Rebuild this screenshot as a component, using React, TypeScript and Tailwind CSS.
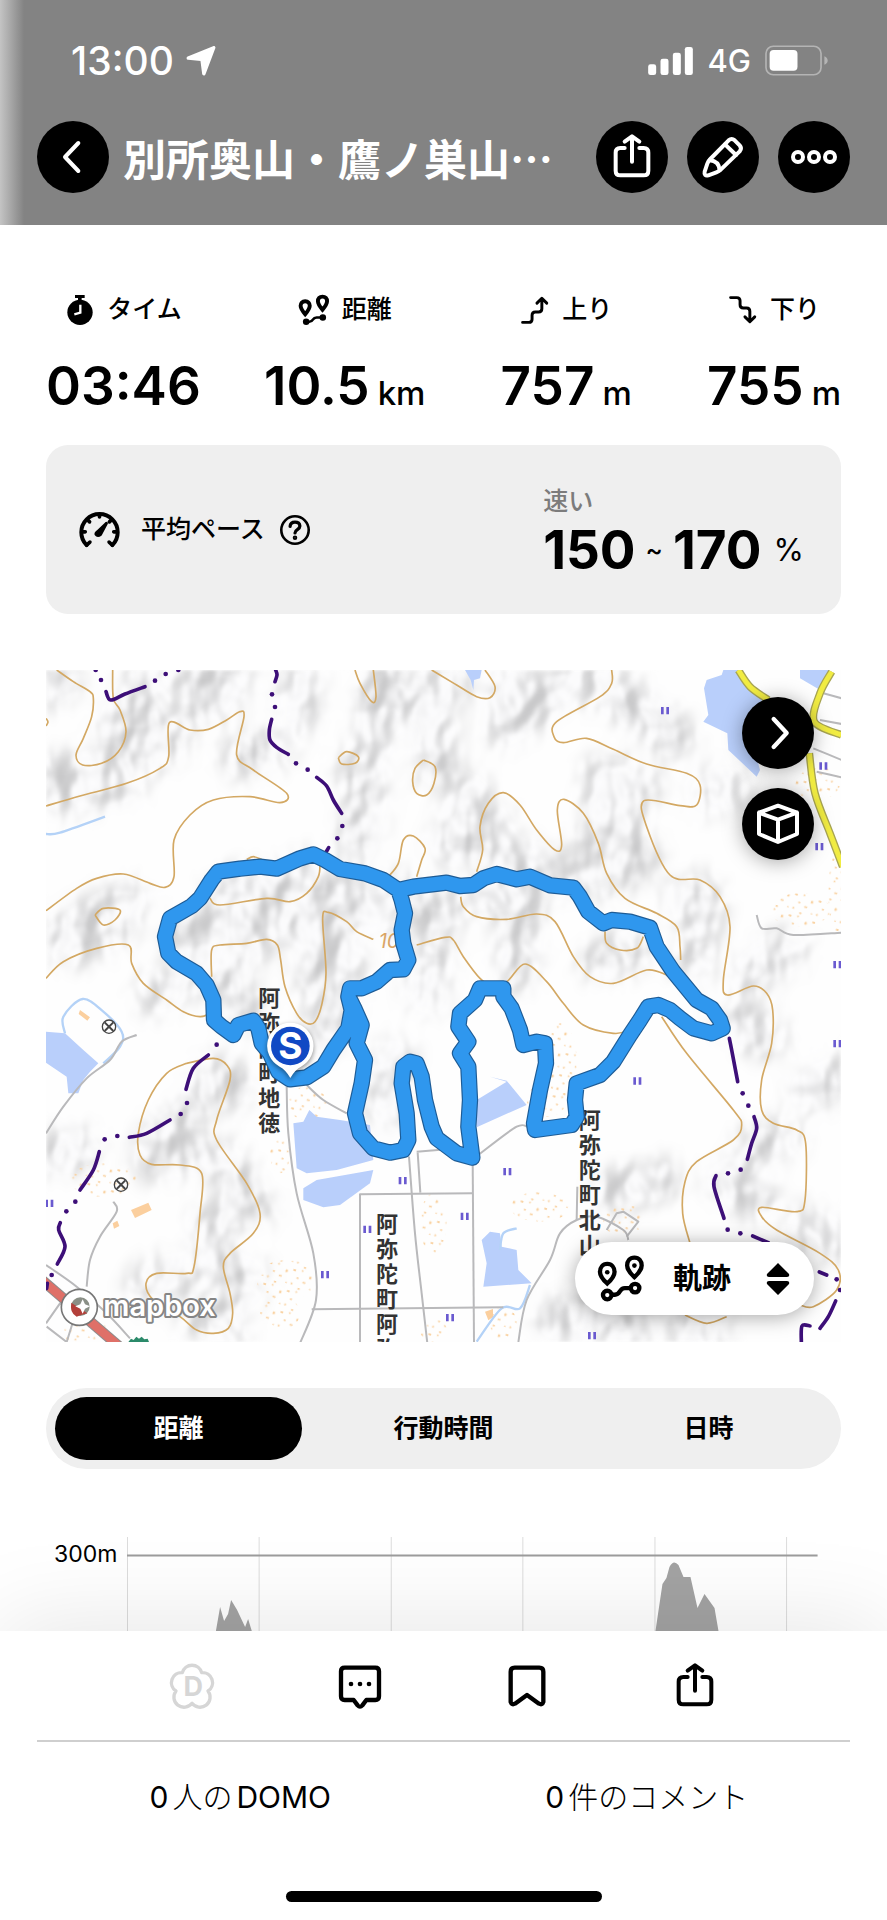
import { useState } from "react";
import type { ReactNode } from "react";
import { clsx } from "clsx";

// --- ICONS ---
type IconProps = { className?: string };

function Glyph({ className, width = 12, children }: IconProps & { width?: number; children: ReactNode }) {
  return (
    <svg
      viewBox="-72 -72 144 144"
      fill="none"
      stroke="currentColor"
      strokeWidth={width}
      strokeLinecap="round"
      strokeLinejoin="round"
      className={clsx("size-12", className)}
      aria-hidden="true"
    >
      {children}
    </svg>
  );
}

const ShareIcon = () => (
  <Glyph>
    <path d="M-22-27H-35q-14 0-14 14V41q0 14 14 14H35q14 0 14-14V-13q0-14-14-14H22" />
    <path d="M0 14V-61M-22-46L0-62 22-46" />
  </Glyph>
);

const PencilIcon = () => (
  <Glyph>
    <path d="M17-50Q26-58 35-50L50-35Q58-26 50-17L-6 37Q-12 43-20 46L-44 55Q-58 58-55 44L-47 20Q-44 12-38 6Z" />
    <path d="M6-38L39-6M-40 10Q-12 12-10 40" />
  </Glyph>
);

const MoreIcon = () => (
  <Glyph>
    <circle cx="-48" cy="0" r="15" />
    <circle cx="0" cy="0" r="15" />
    <circle cx="48" cy="0" r="15" />
  </Glyph>
);

const BackIcon = () => (
  <Glyph>
    <path d="M16-42L-24 0 16 42" />
  </Glyph>
);

const NextIcon = () => (
  <Glyph width={13}>
    <path d="M-13-42L26 0-13 42" />
  </Glyph>
);

const CubeIcon = () => (
  <Glyph>
    <path d="M0-55L57-34V30L0 54-57 30V-34ZM-57-34L0-13 57-34M0-13V54" />
  </Glyph>
);

const CommentIcon = () => (
  <Glyph width={13}>
    <path d="M-46-55H46q11 0 11 11V31q0 11-11 11H19L7 58Q0 66-7 58L-19 42H-46q-11 0-11-11V-44q0-11 11-11z" />
    <g fill="currentColor" stroke="none">
      <circle cx="-27" cy="-6" r="7" />
      <circle cx="0" cy="-6" r="7" />
      <circle cx="27" cy="-6" r="7" />
    </g>
  </Glyph>
);

const BookmarkIcon = () => (
  <Glyph width={13}>
    <path d="M-37-55H37q12 0 12 12V48q-3 10-13 5L0 27-36 53q-10 5-13-5V-43q0-12 12-12z" />
  </Glyph>
);

const DomoIcon = () => (
  <Glyph width={10} className="text-[#d6d6d6]">
    <path d="M29-40A30 30 0 0 1 48 15A30 30 0 0 1 0 52A30 30 0 0 1-48 15A30 30 0 0 1-29-40A30 30 0 0 1 29-40Z" />
    <text
      x="4"
      y="30"
      textAnchor="middle"
      fontSize="81"
      fill="currentColor"
      stroke="none"
      className="font-['Inter',sans-serif] font-bold"
    >
      D
    </text>
  </Glyph>
);

function RouteIcon({ className }: IconProps) {
  const pin = "M0-25c14 0 22 11 22 24C22 14 0 34 0 34S-22 14-22-1C-22-14-14-25 0-25z";
  return (
    <svg viewBox="470 763 145 145" fill="none" stroke="currentColor" strokeWidth="13" className={className} aria-hidden="true">
      <path d={pin} transform="translate(501 815)" />
      <path d={pin} transform="translate(583 796)" />
      <circle cx="501" cy="884" r="13" />
      <circle cx="585" cy="863" r="13" />
      <path d="M514 883h10c18 0 12-20 30-20h18" />
      <g fill="currentColor" stroke="none">
        <circle cx="501" cy="815" r="7" />
        <circle cx="583" cy="795" r="7" />
      </g>
    </svg>
  );
}

function DistanceIcon({ className }: IconProps) {
  return (
    <svg viewBox="770 43 98 96" fill="none" stroke="currentColor" strokeWidth="12" className={className} aria-hidden="true">
      <path d="M792 64c9 0 14 6 14 14 0 9-14 26-14 26s-14-17-14-26c0-8 5-14 14-14zM845 50c9 0 14 6 14 14 0 9-14 26-14 26s-14-17-14-26c0-8 5-14 14-14z" />
      <path d="M795 127h10c14 0 7-13 22-13h18" strokeWidth="8" />
      <g fill="currentColor" stroke="none">
        <circle cx="795" cy="127" r="10" />
        <circle cx="846" cy="114" r="10" />
      </g>
    </svg>
  );
}

const StopwatchIcon = ({ className }: IconProps) => (
  <svg viewBox="75 45 90 90" className={className} aria-hidden="true">
    <path d="M105 45h29v9h-9v8h-11v-8h-9z" />
    <circle cx="120" cy="97" r="38" />
    <path d="M121 74v24l-18 5" fill="none" stroke="#fff" strokeWidth="7" />
  </svg>
);

const ClimbIcon = ({ className }: IconProps) => (
  <svg
    viewBox="223 45 92 90"
    fill="none"
    stroke="currentColor"
    strokeWidth="9"
    strokeLinecap="round"
    strokeLinejoin="round"
    className={className}
    aria-hidden="true"
  >
    <path d="M231 128h19q10 0 10-10v-12q0-10 10-10h10q10 0 10-10V55M275 69l15-15 15 15" />
  </svg>
);

const PaceIcon = () => (
  <svg viewBox="116 685 130 116" fill="none" stroke="#000" strokeWidth="12" strokeLinecap="round" className="h-[39px] w-[43px]" aria-hidden="true">
    <path d="M142 790a55 55 0 1 1 78 0" />
    <path d="M142 790l10-9M220 790l-10-9M128 750h10M234 750h-10M181 697v8M145 714l6 6M217 714l-6 6" strokeWidth="11" />
    <path d="M175 750l27-26-18 34q-7 5-12 1t3-9z" fill="#000" strokeWidth="9" strokeLinejoin="round" />
  </svg>
);

const HelpIcon = () => (
  <svg viewBox="720 701 98 98" fill="none" stroke="#000" strokeWidth="8" strokeLinecap="round" className="block size-8" aria-hidden="true">
    <circle cx="769" cy="750" r="42" />
    <path d="M754 739q1-13 15-13t15 12c0 12-15 10-15 21" strokeWidth="10" />
    <circle cx="769" cy="774" r="3" />
  </svg>
);

// --- MAP DATA ---
// Every list is "x y x y ..." in map units, three units to a pixel.
const contours = [
  "50 30 100 65 150 95 160 115 155 170 130 235 108 285 128 315 185 310 235 275 258 215 240 150 220 115 218 30",
  "18 438 120 408 260 370 360 325 386 290 388 188 450 210 505 208 560 180 600 155 612 170 590 285 640 330 740 400 720 428 630 410 520 420 450 465 402 540 402 650 375 682 330 670 250 642 170 655 110 685 18 752",
  "945 30 960 70 995 125 1008 110 1000 30",
  "1175 30 1200 45 1250 75 1310 110 1350 113 1365 80 1335 30",
  "895 293 920 275 955 290 945 310 905 312 895 293",
  "1150 300 1185 320 1182 370 1160 405 1130 400 1118 365 1125 325 1150 300",
  "1045 650 1075 610 1090 540 1120 528 1155 565 1145 600 1130 650",
  "165 765 190 745 240 750 225 780 190 795 165 765",
  "18 955 70 905 170 865 265 855 275 910 310 970 380 1020 430 1055 480 1070 510 1060",
  "840 610 835 650 800 700 750 725 680 715 540 735 510 715",
  "620 598 640 590 665 598",
  "515 950 515 870 540 855 620 850 680 838 712 855 722 900 735 980 770 1060 800 1090 825 1085 845 1035 858 940 848 775 865 757 920 785 950 815 1000 838",
  "1130 855 1215 832 1240 840 1270 890 1320 955 1350 970 1400 965 1455 912 1520 965 1570 1030 1630 1095 1720 1120 1765 1110 1790 1080",
  "1310 635 1328 570 1320 500 1345 430 1390 398 1440 435 1490 510 1545 570 1565 555 1552 450 1572 418 1630 460 1675 550 1700 640 1755 715 1850 760 1910 800 1920 860 1922 900",
  "1715 30 1715 70 1680 110 1550 185 1542 230 1570 248 1640 235 1720 268 1820 312 1940 340 1980 375 1970 435 1920 437 1812 422 1820 500 1890 645 1980 660 2040 710 2070 800 2050 960 2062 1005 2140 978 2180 1000 2198 1050 2195 1150 2165 1260 2165 1350 2200 1390 2270 1410 2297 1450 2295 1620 2270 1655 2165 1642 2165 1670 2210 1710 2340 1780 2395 1830 2390 1890 2320 1940 2280 1935",
  "1262 710 1270 740 1310 770 1400 778 1490 762 1545 785 1600 890 1650 950 1720 970 1820 930 1880 945",
  "1695 815 1700 850 1740 870 1790 865 1810 830",
  "1865 1070 1940 1180 2080 1350 2105 1395 2080 1440 1970 1505 1935 1565 1928 1660 1950 1750",
  "1935 1965 2000 1990 2060 1970",
  "440 1210 380 1240 325 1320 295 1420 300 1485 335 1513 420 1515 485 1540 480 1660 462 1820 440 1840 350 1840 318 1870 340 1920 420 1970 470 2010 520 2020 565 2005 578 1960 570 1900 550 1820 570 1780 640 1720 660 1660 620 1570 530 1440 530 1380 570 1260 560 1215 520 1195 440 1210",
  "18 175 24 186 18 198",
];

const boundary = [
  "198 95 212 120 255 102 315 80",
  "707 30 711 45 705 65",
  "695 178 688 210 690 240 710 262 745 283",
  "830 352 860 378 880 420 905 460",
  "866 563 856 580",
  "505 1185 460 1225 438 1288",
  "390 1380 320 1420 268 1432",
  "178 1475 160 1530 120 1590",
  "61 1688 56 1710 75 1760 52 1812",
  "22 1870 20 1885",
  "2068 1135 2075 1170 2093 1265",
  "2142 1370 2150 1405 2135 1450 2122 1498",
  "2028 1547 2022 1580 2052 1675",
  "2138 1728 2185 1748",
  "2338 1836 2360 1845",
  "2387 1923 2365 1970 2340 2005",
  "2310 1998 2286 1998 2284 2046",
];

const boundaryDots = [
  [167, 30], [183, 60], [345, 62], [377, 42], [415, 30], [696, 103], [705, 141], [768, 310], [803, 329],
  [907, 498], [892, 535], [530, 1154], [441, 1329], [422, 1362], [232, 1428], [194, 1438], [106, 1625],
  [79, 1654], [35, 1845], [2108, 1300], [2125, 1337], [2102, 1529], [2064, 1540], [2063, 1709],
  [2101, 1720], [2390, 1858], [2400, 1890],
];

const water = [
  "2000 60 2045 45 2050 30 2100 30 2175 115 2120 180 2160 330 2150 350 2065 270 2062 220 1990 185 2005 165 1992 85",
  "1275 30 1325 30 1320 55 1302 60 1300 90 1292 60",
  "2280 30 2370 30 2340 90 2280 55",
  "18 1115 75 1120 130 1170 175 1210 150 1235 130 1260 115 1300 85 1300 80 1250 18 1208",
  "760 1390 790 1385 808 1350 830 1370 900 1380 990 1395 1000 1500 890 1530 800 1540 770 1525",
  "790 1585 830 1560 1000 1530 990 1570 900 1635 850 1642 790 1620",
  "1310 1320 1400 1265 1350 1250 1400 1262 1460 1335 1380 1370 1310 1402",
  "1325 1740 1350 1715 1380 1720 1385 1760 1430 1770 1435 1830 1475 1870 1400 1875 1330 1880 1340 1810",
];

const streams = [
  "18 522 60 518 195 470",
  "75 1120 70 1070 128 1017 190 1055 245 1115 240 1160 190 1210",
  "1470 1875 1440 1945 1385 1945 1310 2045",
  "1380 1770 1390 1720 1430 1705",
];

const roads = [
  "740 1280 745 1420 770 1600 820 1780 828 1920 780 2050",
  "800 1275 850 1320 920 1360",
  "1107 1490 1125 1720 1145 1900 1162 2050",
  "1130 1475 1220 1468",
  "1133 1478 1141 1598",
  "18 1420 70 1340 140 1255 210 1200 245 1145 290 1125",
  "220 1625 230 1655 180 1730 150 1800 140 1880",
  "18 1815 110 1880 200 1960 270 2035",
  "1315 1485 1430 1400 1470 1405",
  "1435 2046 1460 1920 1530 1800 1560 1720 1610 1680 1670 1670 1750 1710 1765 1740",
  "1610 1680 1612 1580",
  "2150 765 2165 805 2210 805 2260 825 2405 818",
  "2350 100 2405 115",
  "2340 180 2405 192",
  "2320 265 2405 300",
  "2330 335 2405 352",
];

const grid = [
  "960 2046 960 1603 1298 1600",
  "815 1948 1390 1942",
  "1298 1500 1302 2046",
  "1700 1710 1730 1660 1750 1655 1795 1685 1760 1730",
  "18 1990 60 1930 110 1950 80 2046 20 2000",
];

const mainRoads = ["2095 30 2130 80 2185 120", "2375 35 2340 100 2323 185 2405 225", "2308 280 2325 400 2370 520 2408 620"];

const paddies = [
  [1875, 152], [2350, 318], [2338, 560], [2392, 914], [28, 1630], [1088, 1562], [982, 1708], [855, 1844],
  [1230, 1973], [2392, 1151], [1792, 1263], [1402, 1535], [1274, 1669], [1656, 2027],
];

// cx, cy, rx, ry of the built-up areas
const villages = [
  [2330, 370, 70, 50], [2280, 750, 90, 50], [2390, 700, 25, 120], [800, 1330, 60, 50], [740, 1860, 90, 60],
  [720, 1960, 60, 50], [190, 1560, 100, 50], [1560, 1200, 50, 110], [1500, 1640, 90, 45], [1750, 1680, 60, 50],
  [1180, 1690, 40, 90], [1390, 1990, 40, 50], [130, 2010, 70, 40], [1520, 1320, 60, 50], [1180, 2010, 40, 35],
  [720, 1480, 30, 60],
];

// Axes of the hills that the relief shading covers
const hills = [
  "60 50 30 80", "330 60 260 140 320 180", "480 50 470 140 540 110 570 50", "230 200 340 240 400 230",
  "20 350 200 330 360 260", "60 400 250 365", "60 820 180 770 260 720", "90 860 230 800", "560 690 700 680 800 640",
  "440 830 540 780 600 800", "780 60 770 160", "1000 230 950 350", "830 760 835 980", "900 690 1020 750",
  "1180 200 1190 320", "910 830 900 980", "540 930 610 1050", "1330 560 1360 500", "1510 130 1580 70 1630 60",
  "1690 350 1800 380 1690 420", "1600 660 1700 650 1800 590", "1940 710 1990 720 1960 900", "1680 900 1780 870",
  "1320 710 1460 730", "1440 830 1430 930", "1400 600 1500 610", "2010 400 2070 380", "2130 950 2180 900 2240 870",
  "520 1250 490 1300 580 1270", "360 1440 420 1400", "540 1500 640 1640", "520 1690 520 1800", "620 1850 600 1880",
  "320 1880 400 1840", "480 1960 560 2000", "120 1470 50 1480", "340 1500 440 1480", "2150 1460 2230 1430",
  "2060 1560 2150 1620", "2300 1700 2380 1740", "1550 1980 1660 1960 1780 2000", "2080 1080 2180 1130",
  "2310 1290 2400 1250", "1720 1590 1860 1560", "880 1040 850 1120", "1950 2000 2000 2030", "1040 60 1020 140 1230 80",
  "1390 200 1420 60 1460 160", "1230 560 1290 400", "980 400 950 560", "1180 850 1160 1000", "730 780 620 860",
  "1760 500 1660 540", "1200 760 1080 700", "1900 230 1700 80", "600 290 700 260", "420 960 350 1000", "1060 1200 1040 1330",
];

const track =
  "M1075 690 1030 660 975 640 900 627 855 600 820 583 780 595 710 626 660 620 600 626 535 635 515 660 480 715 455 738 390 775 375 830 385 880 410 905 470 940 500 975 520 1020 522 1080 545 1100 580 1125 595 1095 640 1082 655 1105 665 1150 690 1180 715 1235 750 1258 800 1252 850 1220 880 1170 925 1105 935 1050 925 1010 930 985 965 985 1010 965 1050 930 1090 928 1105 900 1090 850 1085 810 1095 760 1085 720Z" +
  "M1075 690 1120 680 1220 668 1260 678 1300 675 1330 655 1370 642 1430 658 1470 650 1530 676 1600 683 1620 710 1645 755 1690 790 1715 780 1770 785 1830 803 1850 860 1900 935 1970 1020 2015 1045 2040 1080 2048 1105 2015 1120 1960 1105 1920 1075 1890 1050 1855 1035 1825 1040 1800 1080 1770 1125 1720 1205 1680 1245 1610 1270 1605 1320 1610 1370 1595 1395 1485 1410 1482 1390 1500 1290 1518 1210 1515 1150 1490 1145 1450 1155 1440 1110 1415 1045 1390 1010 1390 985 1320 985 1305 1020 1260 1060 1255 1100 1285 1145 1260 1180 1285 1220 1290 1320 1285 1400 1297 1493 1250 1480 1190 1435 1175 1400 1155 1320 1145 1250 1130 1210 1110 1205 1090 1220 1085 1270 1100 1360 1105 1440 1090 1470 1050 1478 1000 1465 960 1420 945 1360 965 1270 975 1200 950 1150 965 1095 945 1050 930 1020";

// Catmull-Rom curve through the points of a list
function curve(list: string) {
  const n = list.split(" ").map(Number);
  const pts = n.flatMap((x, i) => (i % 2 ? [] : [[x, n[i + 1]]]));
  let d = `M${pts[0].join(" ")}`;
  for (let i = 0; i < pts.length - 1; i++) {
    const a = pts[i - 1] ?? pts[i];
    const b = pts[i];
    const c = pts[i + 1];
    const e = pts[i + 2] ?? c;
    d += `C${b[0] + (c[0] - a[0]) / 6} ${b[1] + (c[1] - a[1]) / 6} ${c[0] - (e[0] - b[0]) / 6} ${c[1] - (e[1] - b[1]) / 6} ${c[0]} ${c[1]}`;
  }
  return d;
}

const Curves = ({ lists }: { lists: string[] }) => (
  <>
    {lists.map((list) => (
      <path key={list} d={curve(list)} />
    ))}
  </>
);

// --- MAP ---
function BaseMap() {
  return (
    <svg viewBox="18 30 2385 2016" className="block w-full" aria-hidden="true">
      <defs>
        <filter id="soften" x="-5%" y="-5%" width="110%" height="110%">
          <feGaussianBlur stdDeviation="30" />
        </filter>
        <filter id="relief" x="0%" y="0%" width="100%" height="100%" colorInterpolationFilters="sRGB">
          <feTurbulence type="fractalNoise" baseFrequency="0.007 0.005" numOctaves="3" seed="7" />
          <feDiffuseLighting surfaceScale="100" lightingColor="#fff">
            <feDistantLight azimuth="215" elevation="55" />
          </feDiffuseLighting>
          <feGaussianBlur stdDeviation="4" />
          <feComponentTransfer>
            <feFuncR type="linear" slope="0.2" intercept="0.79" />
            <feFuncG type="linear" slope="0.2" intercept="0.79" />
            <feFuncB type="linear" slope="0.2" intercept="0.795" />
          </feComponentTransfer>
        </filter>
        <mask id="hills" maskUnits="userSpaceOnUse" x="18" y="30" width="2385" height="2016">
          <g filter="url(#soften)" fill="none" stroke="#fff" strokeWidth="130" strokeLinecap="round" strokeLinejoin="round">
            <Curves lists={hills} />
          </g>
        </mask>
        <pattern id="houses" width="74" height="66" patternUnits="userSpaceOnUse" patternTransform="rotate(17)">
          <g fill="#f9d3a4">
            <rect x="4" y="6" width="8" height="6" />
            <rect x="29" y="2" width="5" height="5" />
            <rect x="56" y="14" width="7" height="8" />
            <rect x="20" y="27" width="6" height="5" />
            <rect x="41" y="35" width="9" height="5" />
            <rect x="8" y="47" width="5" height="6" />
            <rect x="66" y="50" width="4" height="4" />
            <rect x="32" y="57" width="7" height="5" />
          </g>
        </pattern>
      </defs>
      <rect x="18" y="30" width="2385" height="2016" fill="#fefefe" />
      <g mask="url(#hills)">
        <rect x="18" y="30" width="2385" height="2016" filter="url(#relief)" />
      </g>

      {villages.map(([cx, cy, rx, ry]) => (
        <ellipse key={`${cx}-${cy}`} cx={cx} cy={cy} rx={rx} ry={ry} fill="url(#houses)" />
      ))}
      <path
        d="M273 1650l52-22 10 22-50 24zM120 1050l30 22-8 10-26-20zM218 1690l14-8 6 16-16 8zM1335 1955l24-8v24l-14 10z"
        fill="#fbcf9e"
      />

      <g fill="#b9cffb">
        {water.map((points) => (
          <polygon key={points} points={points} />
        ))}
      </g>

      <g fill="none" strokeLinejoin="round">
        <g stroke="#b4d2f7" strokeWidth="7">
          <Curves lists={streams} />
        </g>
        <g stroke="#b9b9bb" strokeWidth="6">
          <Curves lists={roads} />
          {grid.map((points) => (
            <polyline key={points} points={points} />
          ))}
        </g>
        <path d="M8 1862L250 2070" stroke="#8d8d8d" strokeWidth="32" />
        <path d="M8 1862L250 2070" stroke="#df7068" strokeWidth="26" />
        <g stroke="#a8a552" strokeWidth="23">
          <Curves lists={mainRoads} />
        </g>
        <g stroke="#f1ec42" strokeWidth="15">
          <Curves lists={mainRoads} />
        </g>
        <g stroke="#d3a863" strokeWidth="5">
          <Curves lists={contours} />
        </g>
        <g stroke="#3d0f78" strokeWidth="11" strokeLinecap="round">
          <Curves lists={boundary} />
        </g>
      </g>
      <g fill="#3d0f78">
        {boundaryDots.map(([x, y]) => (
          <circle key={`${x}-${y}`} cx={x} cy={y} r="7" />
        ))}
      </g>
      <g fill="#6a5ad0">
        {paddies.map(([x, y]) => (
          <path key={`${x}-${y}`} d={`M${x - 12} ${y - 11}h8v22h-8zM${x + 4} ${y - 11}h8v22h-8z`} />
        ))}
      </g>
      {[[207, 1100], [243, 1574]].map(([x, y]) => (
        <g key={y} fill="none" stroke="#444" strokeWidth="4">
          <circle cx={x} cy={y} r="20" />
          <path d={`M${x - 13} ${y - 13}l26 26M${x + 13} ${y - 13}l-26 26`} strokeWidth="6" />
        </g>
      ))}
      <text x="1016" y="864" fontSize="60" fill="#d9a566" className="font-['Inter',sans-serif] italic">
        10
      </text>
      <path d="M265 2046l8-10 8 4 8-10 8 6 8-6 8 8 10-2 4 10z" fill="#2b8a6a" />
    </svg>
  );
}

function TrackLayer() {
  return (
    <svg viewBox="18 30 2385 2016" className="absolute inset-0 size-full" role="img" aria-label="軌跡">
      <g fill="none" strokeLinecap="round" strokeLinejoin="round">
        <path d={track} stroke="#1e5c96" strokeWidth="49" />
        <path d={track} stroke="#2f97ee" strokeWidth="42" />
      </g>

      {/* Start pin */}
      <g className="drop-shadow-[0_6px_8px_rgba(0,0,0,0.45)]">
        <path d="M751 1088a70 70 0 0 1 32 132q-18 9-32 34q-14-25-32-34a70 70 0 0 1 32-132z" fill="#fff" />
      </g>
      <circle cx="751" cy="1158" r="58" fill="#1149c4" />
      <text x="751" y="1198" textAnchor="middle" fontSize="111" fill="#fff" className="font-['Inter',sans-serif] font-bold">
        S
      </text>

      {/* Map provider */}
      <circle cx="118" cy="1942" r="54" fill="#fff" stroke="#777" strokeWidth="5" />
      <circle cx="121" cy="1940" r="28" fill="#8a8f86" />
      <path d="M94 1928q-6 30 16 42q14-6 32-10z" fill="#b3403a" />
      <path d="M128 1918l7 15 15 6-15 7-7 15-7-15-15-7 15-6z" fill="#fff" />
      <text
        x="190"
        y="1968"
        fontSize="87"
        fill="#fff"
        stroke="#858585"
        strokeWidth="12"
        paintOrder="stroke"
        strokeLinejoin="round"
        className="font-['Inter',sans-serif] font-semibold"
      >
        mapbox
      </text>
    </svg>
  );
}

const placeNames = [
  { name: "阿弥陀町地徳", place: "left-[26.7%] top-[47%]" },
  { name: "阿弥陀町阿弥", place: "left-[41.5%] top-[80.7%]" },
  { name: "阿弥陀町北山", place: "left-[67%] top-[65.2%]" },
];

function ActivityMap() {
  return (
    <section className="relative mt-14 overflow-hidden">
      <BaseMap />
      {placeNames.map(({ name, place }) => (
        <div key={name} className={clsx("absolute flex flex-col text-[22px] leading-[25px] font-bold text-[#333]", place)}>
          {[...name].map((char, i) => (
            <span key={i}>{char}</span>
          ))}
        </div>
      ))}
      <TrackLayer />
      <div className="absolute top-[27px] right-[27px] flex flex-col gap-[19px]">
        <RoundButton label="次へ" raised>
          <NextIcon />
        </RoundButton>
        <RoundButton label="3D" raised>
          <CubeIcon />
        </RoundButton>
      </div>
      <label className="absolute right-[27px] bottom-[27px] flex h-[73px] items-center rounded-full bg-white pr-6 pl-[22px] shadow-[0_2px_20px_rgba(0,0,0,0.35)]">
        <RouteIcon className="size-12" />
        <select aria-label="表示" className="mr-[34px] ml-7 appearance-none bg-transparent text-[29px] leading-9 font-bold outline-none">
          <option>軌跡</option>
        </select>
        <svg viewBox="0 0 24 32" className="h-8 w-6" aria-hidden="true">
          <path d="M12 0l11 11q1 3-2 3H3q-3 0-2-3zM12 32l11-11q1-3-2-3H3q-3 0-2 3z" />
        </svg>
      </label>
    </section>
  );
}

// --- LAYOUT PARTS ---
function RoundButton({ label, raised, children }: { label: string; raised?: boolean; children: ReactNode }) {
  return (
    <button
      aria-label={label}
      className={clsx(
        "flex size-[72px] shrink-0 items-center justify-center rounded-full bg-black text-white",
        raised && "shadow-[0_2px_20px_rgba(0,0,0,0.35)]"
      )}
    >
      {children}
    </button>
  );
}

function Header() {
  return (
    <header className="h-[225px] shrink-0 bg-[#838383] bg-[linear-gradient(to_right,#c4c4c4,#838383_24px)] text-white">
      <div className="flex h-[121px] items-center justify-between pr-[59px] pl-[71px]">
        <div className="flex items-center gap-3">
          <span className="text-[39px] leading-10 font-medium">13:00</span>
          <svg viewBox="2 2 26 26" className="size-[30px]" fill="currentColor" aria-hidden="true">
            <path
              d="M26 3.500L17.500 26 16 14.500Q15.900 13.600 15 13.500L4 12.500Z"
              stroke="currentColor"
              strokeWidth="3"
              strokeLinejoin="round"
            />
          </svg>
        </div>
        <div className="flex items-center gap-[14px]">
          <svg viewBox="176 45 134 84" className="h-7 w-[45px]" fill="currentColor" aria-hidden="true">
            <rect x="176" y="97" width="24" height="32" rx="7" />
            <rect x="213" y="80" width="24" height="49" rx="7" />
            <rect x="250" y="62" width="24" height="67" rx="7" />
            <rect x="286" y="45" width="24" height="84" rx="7" />
          </svg>
          <span className="text-[31px] leading-10 font-medium">4G</span>
          <svg viewBox="524 41 190 92" className="h-[31px] w-[63px]" aria-hidden="true">
            <rect x="527" y="44" width="166" height="86" rx="22" fill="none" stroke="#b4b4b4" strokeWidth="5" />
            <rect x="538" y="55" width="84" height="63" rx="12" fill="#fff" />
            <path d="M703 74q10 4 10 13t-10 13z" fill="#b4b4b4" />
          </svg>
        </div>
      </div>
      <div className="flex items-center px-[37px]">
        <RoundButton label="戻る">
          <BackIcon />
        </RoundButton>
        <h1 className="ml-[14px] flex-1 font-['Noto_Sans_CJK_JP',sans-serif] text-[43px] leading-[70px] font-bold whitespace-nowrap">
          別所奥山・鷹ノ巣山…
        </h1>
        <div className="flex gap-[19px]">
          <RoundButton label="共有">
            <ShareIcon />
          </RoundButton>
          <RoundButton label="編集">
            <PencilIcon />
          </RoundButton>
          <RoundButton label="その他">
            <MoreIcon />
          </RoundButton>
        </div>
      </div>
    </header>
  );
}

const stats = [
  { label: "タイム", value: "03:46", unit: "", icon: <StopwatchIcon className="size-[30px]" /> },
  { label: "距離", value: "10.5", unit: "km", icon: <DistanceIcon className="size-8" /> },
  { label: "上り", value: "757", unit: "m", icon: <ClimbIcon className="size-[30px]" /> },
  { label: "下り", value: "755", unit: "m", icon: <ClimbIcon className="size-[30px] -scale-y-100" /> },
];

function Stats() {
  return (
    <dl className="flex justify-between">
      {stats.map(({ label, value, unit, icon }) => (
        <div key={label} className="flex flex-col items-center first:-mr-3">
          <dt className="flex h-10 items-center gap-3 text-[25px] font-medium">
            {icon}
            {label}
          </dt>
          <dd className="mt-5 text-[53px] leading-[72px] font-semibold">
            {value}
            {unit && <span className="ml-2 text-[33px] font-medium">{unit}</span>}
          </dd>
        </div>
      ))}
    </dl>
  );
}

function PaceCard() {
  return (
    <section className="mt-4 flex h-[169px] items-center justify-between rounded-[22px] bg-[#efefef] pr-[37px] pl-8">
      <div className="flex items-center">
        <PaceIcon />
        <span className="mr-[14px] ml-5 text-[25px] font-medium">平均ペース</span>
        <button aria-label="ヘルプ">
          <HelpIcon />
        </button>
      </div>
      <div className="pt-2">
        <p className="text-[25px] leading-8 font-medium text-[#7c7c7c]">速い</p>
        <div className="flex items-center text-[53px] leading-[66px] font-bold">
          150
          <span className="mx-[10px] text-[26px] leading-8 font-medium">~</span>
          170
          <span className="ml-3 text-[31px] leading-8 font-normal">%</span>
        </div>
      </div>
    </section>
  );
}

const tabs = ["距離", "行動時間", "日時"];

function AxisTabs() {
  const [active, setActive] = useState(tabs[0]);

  return (
    <div className="mt-[46px] grid h-[81px] grid-cols-3 rounded-full bg-[#efefef]">
      {tabs.map((tab) => (
        <button
          key={tab}
          onClick={() => setActive(tab)}
          className={clsx("m-[9px] rounded-full text-[25px] font-bold", active === tab ? "bg-black text-white" : "text-black")}
        >
          {tab}
        </button>
      ))}
    </div>
  );
}

function ElevationChart() {
  return (
    <div className="mt-16 flex items-start pl-2">
      <span className="text-[23px] leading-[42px]">300m</span>
      <svg viewBox="0 0 713 300" className="ml-[10px] block min-w-0 flex-1" aria-hidden="true">
        <g stroke="#dcdcdc">
          {[0.5, 132, 264, 395.5, 527.5, 659].map((x) => (
            <path key={x} d={`M${x} 4V300`} />
          ))}
        </g>
        <path d="M0 22.500H690" stroke="#9c9c9c" strokeWidth="2" />
        <path d="M88 110L89 97 93 74 97 88 101 81 104 67 110 77 118 94 121 86 125 99 127 110Z" fill="#a3a3a3" />
        <path d="M527 110L528 98 535 51 539 45 542 34Q546 26 551 32L556 44H563L570 75 577 61 587 75 591 98 593 110Z" fill="#a3a3a3" />
      </svg>
    </div>
  );
}

function ActionBar() {
  return (
    <footer className="relative shrink-0 bg-white px-[37px] shadow-[0_-6px_90px_rgba(0,0,0,0.1)]">
      <div className="flex h-[109px] items-center justify-around px-[71px]">
        <button aria-label="DOMO">
          <DomoIcon />
        </button>
        <button aria-label="コメント">
          <CommentIcon />
        </button>
        <button aria-label="ブックマーク">
          <BookmarkIcon />
        </button>
        <button aria-label="共有">
          <ShareIcon />
        </button>
      </div>
      <div className="grid h-28 grid-cols-2 border-t-2 border-[#cfcfcf] text-[30px]">
        <button className="flex items-center justify-center gap-1">
          <span>0</span>
          <span className="font-light">人の</span>
          <span>DOMO</span>
        </button>
        <button className="flex items-center justify-center gap-1">
          <span>0</span>
          <span className="font-light">件のコメント</span>
        </button>
      </div>
      <div className="flex h-[68px] items-end justify-center pb-[18px]">
        <div className="h-[11px] w-[316px] rounded-full bg-black" />
      </div>
    </footer>
  );
}

export default function App() {
  return (
    <div lang="ja" className="flex h-screen flex-col bg-white font-['Inter','Noto_Sans_CJK_JP',sans-serif] text-black">
      <Header />
      <main className="min-h-0 flex-1 overflow-y-auto px-[46px] pt-[65px] [scrollbar-width:none]">
        <Stats />
        <PaceCard />
        <ActivityMap />
        <AxisTabs />
        <ElevationChart />
      </main>
      <ActionBar />
    </div>
  );
}
